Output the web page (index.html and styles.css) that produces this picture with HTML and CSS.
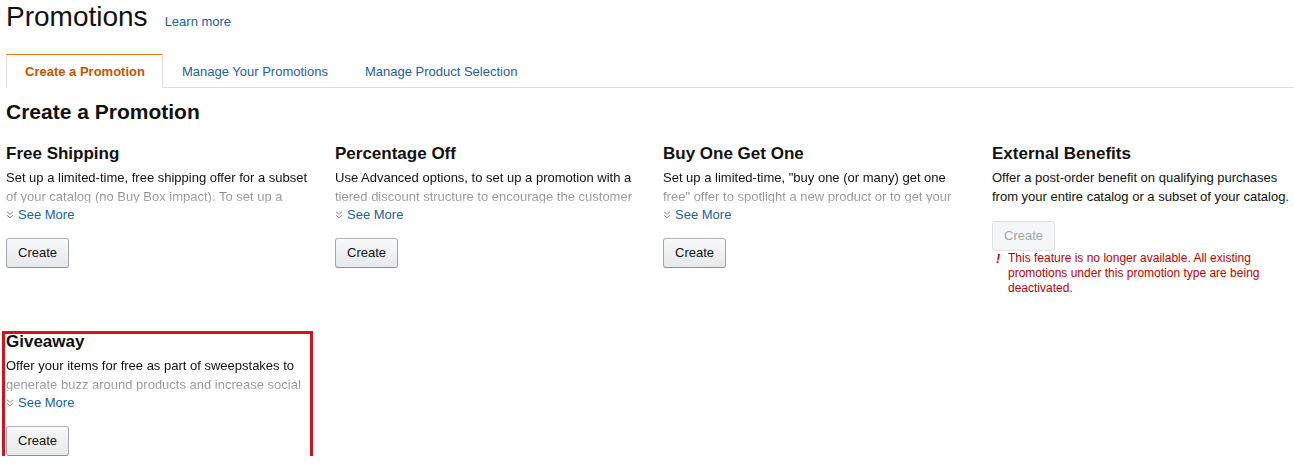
FILE: index.html
```html
<!DOCTYPE html>
<html lang="en">
<head>
<meta charset="utf-8">
<title>Promotions</title>
<link rel="stylesheet" href="styles.css">
</head>
<body>
<div class="page">
  <header class="page-header">
    <h1 class="page-title">Promotions</h1>
    <a class="link learn-more" href="#">Learn more</a>
  </header>

  <nav class="tabs">
    <a class="tab tab-active" href="#">Create a Promotion</a>
    <a class="tab" href="#">Manage Your Promotions</a>
    <a class="tab" href="#">Manage Product Selection</a>
  </nav>

  <h2 class="section-title">Create a Promotion</h2>

  <div class="cards">
    <section class="card">
      <h3 class="card-title">Free Shipping</h3>
      <p class="card-desc card-desc-clipped">Set up a limited-time, free shipping offer for a subset of your catalog (no Buy Box impact). To set up a shipping promotion that applies to all of your offers, use shipping settings.</p>
      <a class="see-more" href="#"><svg class="chev" width="8" height="8" viewBox="0 0 8 8"><path d="M1 0.8 L4 3.3 L7 0.8 M1 4.3 L4 6.8 L7 4.3" fill="none" stroke="#8a8a8a" stroke-width="1"/></svg>See More</a>
      <button class="btn" type="button">Create</button>
    </section>

    <section class="card">
      <h3 class="card-title">Percentage Off</h3>
      <p class="card-desc card-desc-clipped">Use Advanced options, to set up a promotion with a tiered discount structure to encourage the customer to buy more.</p>
      <a class="see-more" href="#"><svg class="chev" width="8" height="8" viewBox="0 0 8 8"><path d="M1 0.8 L4 3.3 L7 0.8 M1 4.3 L4 6.8 L7 4.3" fill="none" stroke="#8a8a8a" stroke-width="1"/></svg>See More</a>
      <button class="btn" type="button">Create</button>
    </section>

    <section class="card">
      <h3 class="card-title">Buy One Get One</h3>
      <p class="card-desc card-desc-clipped">Set up a limited-time, "buy one (or many) get one free" offer to spotlight a new product or to get your customers to try something new.</p>
      <a class="see-more" href="#"><svg class="chev" width="8" height="8" viewBox="0 0 8 8"><path d="M1 0.8 L4 3.3 L7 0.8 M1 4.3 L4 6.8 L7 4.3" fill="none" stroke="#8a8a8a" stroke-width="1"/></svg>See More</a>
      <button class="btn" type="button">Create</button>
    </section>

    <section class="card">
      <h3 class="card-title">External Benefits</h3>
      <p class="card-desc">Offer a post-order benefit on qualifying purchases from your entire catalog or a subset of your catalog.</p>
      <button class="btn btn-disabled btn-tight" type="button" disabled>Create</button>
      <div class="error">
        <span class="error-icon">!</span>
        <span class="error-text">This feature is no longer available. All existing promotions under this promotion type are being deactivated.</span>
      </div>
    </section>

    <section class="card card-highlight">
      <h3 class="card-title">Giveaway</h3>
      <p class="card-desc card-desc-clipped">Offer your items for free as part of sweepstakes to generate buzz around products and increase social media engagement.</p>
      <a class="see-more" href="#"><svg class="chev" width="8" height="8" viewBox="0 0 8 8"><path d="M1 0.8 L4 3.3 L7 0.8 M1 4.3 L4 6.8 L7 4.3" fill="none" stroke="#8a8a8a" stroke-width="1"/></svg>See More</a>
      <button class="btn" type="button">Create</button>
    </section>
  </div>
</div>
</body>
</html>
```

FILE: styles.css
```css
* { box-sizing: border-box; }

html, body {
  margin: 0;
  padding: 0;
  background: #fff;
}

body {
  font-family: "Liberation Sans", Arial, Helvetica, sans-serif;
  color: #111;
  font-size: 13px;
  overflow: hidden;
}

.page {
  padding: 1px 0 0 6px;
}

.link {
  color: #1b5fa6;
  text-decoration: none;
}

.page-header {
  display: flex;
  align-items: baseline;
  gap: 17px;
}

.page-title {
  margin: 0;
  font-size: 28px;
  font-weight: normal;
  line-height: 32px;
}

.learn-more {
  font-size: 13px;
}

.tabs {
  display: flex;
  margin-top: 21px;
  border-bottom: 1px solid #ddd;
}

.tab {
  display: block;
  height: 34px;
  margin-bottom: -1px;
  padding: 1px 17px 0 18px;
  border: 1px solid transparent;
  line-height: 31px;
  font-size: 13px;
  color: #1b5fa6;
  text-decoration: none;
}

.tab-active {
  border-color: #ddd;
  border-top-color: #e47911;
  border-bottom-color: #fff;
  background: #fff;
  color: #c45500;
  font-weight: bold;
}

.section-title {
  margin: 12px 0 20px;
  font-size: 21px;
  line-height: 24px;
  font-weight: bold;
}

.cards {
  display: grid;
  grid-template-columns: 329px 328px 329px 1fr;
  row-gap: 36px;
  align-items: start;
}

.card {
  width: 304px;
  display: flex;
  flex-direction: column;
  align-items: flex-start;
}

.card-title {
  margin: 0 0 4px;
  font-size: 17px;
  line-height: 20px;
  font-weight: bold;
}

.card-desc {
  margin: 0;
  font-size: 13px;
  line-height: 19px;
}

.card-desc-clipped {
  height: 35px;
  overflow: hidden;
  -webkit-mask-image: linear-gradient(to bottom, #000 0, #000 18px, rgba(0,0,0,0.55) 21px, rgba(0,0,0,0.35) 35px);
  mask-image: linear-gradient(to bottom, #000 0, #000 18px, rgba(0,0,0,0.55) 21px, rgba(0,0,0,0.35) 35px);
}

.see-more {
  display: flex;
  align-items: center;
  margin-top: 2px;
  line-height: 19px;
  font-size: 13px;
  color: #1b5fa6;
  text-decoration: none;
}

.chev {
  display: block;
  margin-right: 4px;
  margin-top: 1px;
}

.btn {
  margin-top: 14px;
  height: 30px;
  padding: 0 11px;
  font-family: inherit;
  font-size: 13px;
  line-height: 28px;
  color: #111;
  background: linear-gradient(to bottom, #f7f8fa, #e7e9ec);
  border: 1px solid;
  border-color: #adb1b8 #a2a6ac #8d9096;
  border-radius: 3px;
  box-shadow: inset 0 1px 0 rgba(255,255,255,0.6);
  cursor: pointer;
}

.btn-tight {
  margin-top: 15px;
}

.btn-disabled {
  color: #a6a6a6;
  background: #f5f6f7;
  border-color: #e0e2e5;
  box-shadow: none;
  cursor: default;
}

.error {
  display: flex;
  align-items: flex-start;
  padding-left: 4px;
  font-size: 12px;
  line-height: 15px;
  color: #c40000;
}

.error-icon {
  flex: 0 0 12px;
  font-style: italic;
  font-weight: bold;
  font-size: 13px;
  color: #d00;
}

.card-highlight {
  position: relative;
}

.card-highlight::after {
  content: "";
  box-sizing: border-box;
  position: absolute;
  top: -1px;
  left: -4px;
  width: 311px;
  bottom: -5px;
  border: 3px solid #d5121c;
  pointer-events: none;
}
```
